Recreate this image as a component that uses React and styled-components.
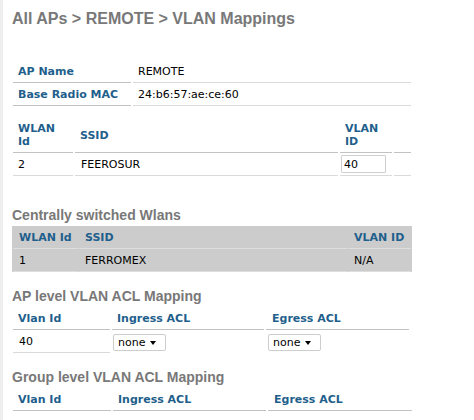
import styled, { createGlobalStyle } from "styled-components";

const GlobalStyle = createGlobalStyle`
  * { box-sizing: border-box; }
  body { margin: 0; background: #fff; }
`;

const Page = styled.div`
  min-height: 100vh;
  border-left: 3px solid #eeeeee;
  padding: 10px 0 0 8px;
  font-family: "DejaVu Sans", Verdana, sans-serif;
  font-size: 11px;
  color: #000;
`;

const Title = styled.h1`
  margin: 0 0 0 1px;
  font: bold 16px/18px "Liberation Sans", Arial, sans-serif;
  color: #787878;
`;

const Heading = styled.h2`
  margin: ${(p) => p.$top ?? 16}px 0 3px 1px;
  font: bold 14px/16px "Liberation Sans", Arial, sans-serif;
  color: #787878;
`;

const Table = styled.table`
  table-layout: fixed;
  width: ${(p) => p.$width}px;
  margin: ${(p) => p.$top ?? 0}px 0 0 ${(p) => p.$left ?? 0}px;
  border-collapse: separate;
  border-spacing: ${(p) => p.$gap ?? 2}px 0;
  background: ${(p) => (p.$shaded ? "#cccccc" : "transparent")};
`;

const HeadCell = styled.th`
  width: ${(p) => (p.$w ? `${p.$w}px` : "auto")};
  padding: 5px 5px 4px ${(p) => p.$pl ?? 5}px;
  line-height: 13px;
  text-align: left;
  vertical-align: middle;
  font-weight: bold;
  color: #1f5f8c;
  border-bottom: 1px solid ${(p) => (p.$shaded ? "#dedede" : "#c2c2c2")};
`;

const Cell = styled.td`
  padding: 5px 5px 4px ${(p) => p.$pl ?? 5}px;
  line-height: 13px;
  vertical-align: middle;
  white-space: nowrap;
  border-bottom: ${(p) =>
    p.$plain ? "none" : `1px solid ${p.$shaded ? "#dedede" : "#dadada"}`};
`;

const FieldCell = styled(Cell)`
  padding: ${(p) => (p.$select ? "3px 1px 2px" : "2px 1px")};
`;

const TextInput = styled.input`
  display: block;
  width: 45px;
  height: 18px;
  margin: 0;
  padding: 0 2px;
  border: 1px solid #cfcfcf;
  border-radius: 1px;
  font: 11px "DejaVu Sans", Verdana, sans-serif;
  color: #000;
  background: #fff;
  outline: none;
`;

const SelectBox = styled.div`
  display: flex;
  align-items: center;
  width: 53px;
  height: 17px;
  padding: 0 0 0 4px;
  border: 1px solid #cdcdcd;
  border-radius: 2px;
  background: #fff;
  line-height: 13px;
`;

const Caret = styled.span`
  width: 0;
  height: 0;
  margin: 2px 9px 0 auto;
  border-left: 3px solid transparent;
  border-right: 3px solid transparent;
  border-top: 4px solid #000;
`;

const Select = ({ value }) => (
  <SelectBox>
    {value}
    <Caret />
  </SelectBox>
);

const crumbs = ["All APs", "REMOTE", "VLAN Mappings"].join(" > ");

const info = [
  ["AP Name", "REMOTE"],
  ["Base Radio MAC", "24:b6:57:ae:ce:60"],
];

const AclTable = ({ widths, children, gap }) => (
  <Table $width={400} $gap={gap}>
    <thead>
      <tr>
        <HeadCell $w={widths[0]}>Vlan Id</HeadCell>
        <HeadCell $w={widths[1]}>Ingress ACL</HeadCell>
        <HeadCell $w={widths[2]} $pl={6}>Egress ACL</HeadCell>
      </tr>
    </thead>
    {children}
  </Table>
);

export default function App() {
  return (
    <Page>
      <GlobalStyle />
      <Title>{crumbs}</Title>

      <Table $width={402} $top={32}>
        <tbody>
          {info.map(([label, value]) => (
            <tr key={label}>
              <HeadCell $w={118}>{label}</HeadCell>
              <Cell>{value}</Cell>
            </tr>
          ))}
        </tbody>
      </Table>

      <Table $width={402} $top={11}>
        <thead>
          <tr>
            <HeadCell $w={60}>
              WLAN
              <br />
              Id
            </HeadCell>
            <HeadCell $w={263}>SSID</HeadCell>
            <HeadCell $w={52}>
              VLAN
              <br />
              ID
            </HeadCell>
            <HeadCell $w={17} />
          </tr>
        </thead>
        <tbody>
          <tr>
            <Cell>2</Cell>
            <Cell $pl={6}>FEEROSUR</Cell>
            <FieldCell>
              <TextInput defaultValue="40" />
            </FieldCell>
            <Cell />
          </tr>
        </tbody>
      </Table>

      <Heading $top={31}>Centrally switched Wlans</Heading>
      <Table $width={400} $left={1} $gap={1} $shaded>
        <thead>
          <tr>
            <HeadCell $w={65} $pl={6} $shaded>WLAN Id</HeadCell>
            <HeadCell $w={268} $pl={6} $shaded>SSID</HeadCell>
            <HeadCell $w={63} $pl={6} $shaded>VLAN ID</HeadCell>
          </tr>
        </thead>
        <tbody>
          <tr>
            <Cell $pl={6} $shaded>1</Cell>
            <Cell $pl={6} $shaded>FERROMEX</Cell>
            <Cell $pl={6} $shaded>N/A</Cell>
          </tr>
        </tbody>
      </Table>

      <Heading>AP level VLAN ACL Mapping</Heading>
      <AclTable widths={[97, 152, 143]}>
        <tbody>
          <tr>
            <Cell $pl={6}>40</Cell>
            <FieldCell $select $plain>
              <Select value="none" />
            </FieldCell>
            <FieldCell $select $plain style={{ paddingLeft: 2 }}>
              <Select value="none" />
            </FieldCell>
          </tr>
        </tbody>
      </AclTable>

      <Heading>Group level VLAN ACL Mapping</Heading>
      <AclTable widths={[98, 153, 144]} />
    </Page>
  );
}
